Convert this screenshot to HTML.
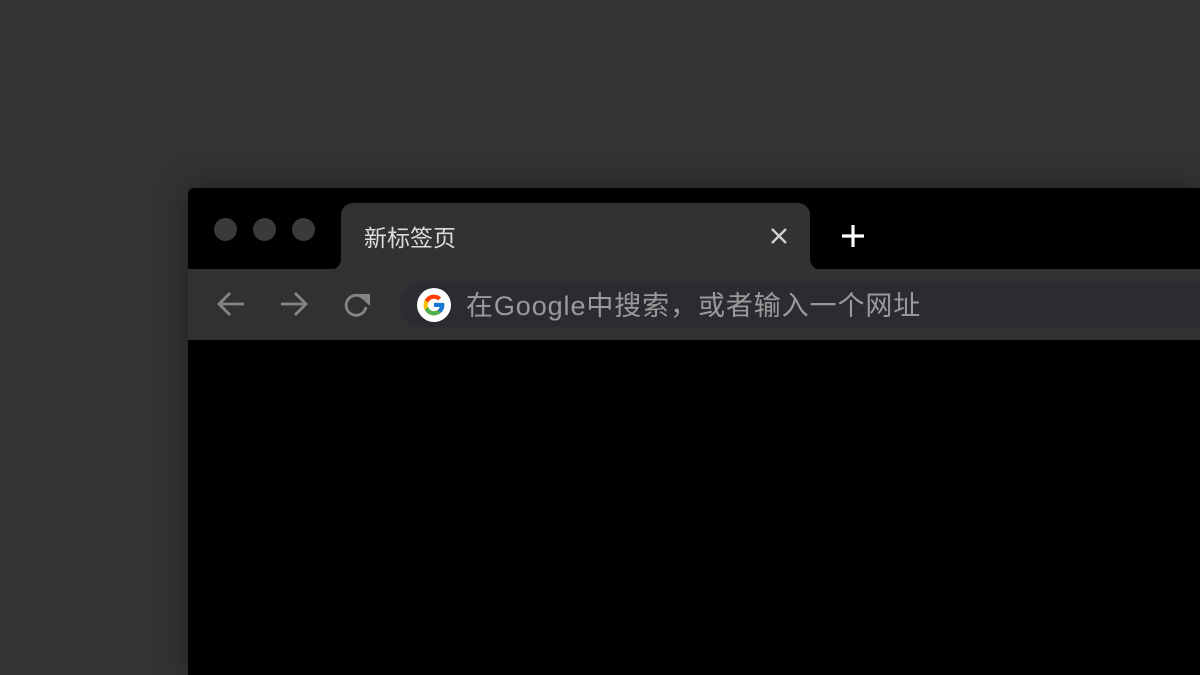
<!DOCTYPE html>
<html><head><meta charset="utf-8"><style>
html,body{margin:0;width:1200px;height:675px;overflow:hidden}
body{background:#333333;position:relative;font-family:"Liberation Sans","Noto Sans CJK SC",sans-serif}
.win{position:absolute;left:188px;top:188px;width:1012px;height:487px;background:#000;border-radius:6px 0 0 0;box-shadow:0 0 30px rgba(0,0,0,.35)}
.dot{position:absolute;top:218px;width:23px;height:23px;border-radius:50%;background:#3a3a3a}
.tab{position:absolute;left:341px;top:203px;width:469px;height:67px;background:#323232;border-radius:12px 12px 0 0}
.tab:before,.tab:after{content:"";position:absolute;bottom:0;width:12px;height:12px}
.tab:before{left:-12px;background:radial-gradient(circle at 0 0,transparent 12px,#323232 12.5px)}
.tab:after{right:-12px;background:radial-gradient(circle at 100% 0,transparent 12px,#323232 12.5px)}
.tbar{position:absolute;left:188px;top:269px;width:1012px;height:71px;background:#303133}
.omni{position:absolute;left:400px;top:283px;width:800px;height:44px;background:#2a2c31;border-radius:22px 0 0 22px}
</style></head><body>
<div class="win"></div>
<div class="dot" style="left:214px"></div><div class="dot" style="left:253px"></div><div class="dot" style="left:292px"></div>
<div class="tab"><span style="position:absolute;left:23px;top:16px;font-size:23px;color:#dcdcdc">新标签页</span>
<svg style="position:absolute;left:429px;top:24px" width="18" height="18" viewBox="0 0 18 18"><path d="M2 2L16 16M16 2L2 16" stroke="#d0d0d0" stroke-width="2.4"/></svg></div>
<svg style="position:absolute;left:841px;top:224px" width="24" height="24" viewBox="0 0 24 24"><path d="M12 1V23M1 12H23" stroke="#fff" stroke-width="3.2"/></svg>
<div class="tbar"></div>
<div class="omni"></div>
<svg style="position:absolute;left:216px;top:291px" width="30" height="26" viewBox="0 0 30 26"><path d="M28 13H4M14 2L3 13L14 24" stroke="#858585" stroke-width="2.8" fill="none"/></svg>
<svg style="position:absolute;left:279px;top:291px" width="30" height="26" viewBox="0 0 30 26"><path d="M2 13H26M16 2L27 13L16 24" stroke="#858585" stroke-width="2.8" fill="none"/></svg>
<svg style="position:absolute;left:342px;top:290px" width="30" height="30" viewBox="0 0 30 30"><path d="M24 17A10 10 0 1 1 21 8" stroke="#858585" stroke-width="2.8" fill="none"/><path d="M15 4H28V16Z" fill="#858585"/></svg>
<svg style="position:absolute;left:417px;top:288px" width="34" height="34" viewBox="0 0 34 34"><circle cx="17" cy="17" r="17" fill="#fff"/><g transform="translate(4.5 4.5) scale(.52)"><path d="M43.6 20.5H42V20H24v8h11.3C33.7 32.7 29.2 36 24 36c-6.6 0-12-5.4-12-12s5.4-12 12-12c3.1 0 5.8 1.2 8 3.1l5.7-5.7C34 6.1 29.3 4 24 4 13 4 4 13 4 24s9 20 20 20 20-9 20-20c0-1.3-.1-2.4-.4-3.5z" fill="#FFC107"/><path d="M6.3 14.7l6.6 4.8C14.7 15.1 19 12 24 12c3.1 0 5.8 1.2 8 3.1l5.7-5.7C34 6.1 29.3 4 24 4 16.3 4 9.7 8.3 6.3 14.7z" fill="#FF3D00"/><path d="M24 44c5.2 0 9.9-2 13.4-5.2l-6.2-5.2C29.2 35.1 26.7 36 24 36c-5.2 0-9.6-3.3-11.3-8l-6.5 5C9.5 39.6 16.2 44 24 44z" fill="#4CAF50"/><path d="M43.6 20.5H42V20H24v8h11.3c-.8 2.2-2.2 4.2-4.1 5.6l6.2 5.2C37 39.2 44 34 44 24c0-1.3-.1-2.4-.4-3.5z" fill="#1976D2"/></g></svg>
<span style="position:absolute;left:466px;top:284px;font-size:27px;letter-spacing:.9px;color:#9a9a9a;white-space:nowrap">在Google中搜索，或者输入一个网址</span>
</body></html>
